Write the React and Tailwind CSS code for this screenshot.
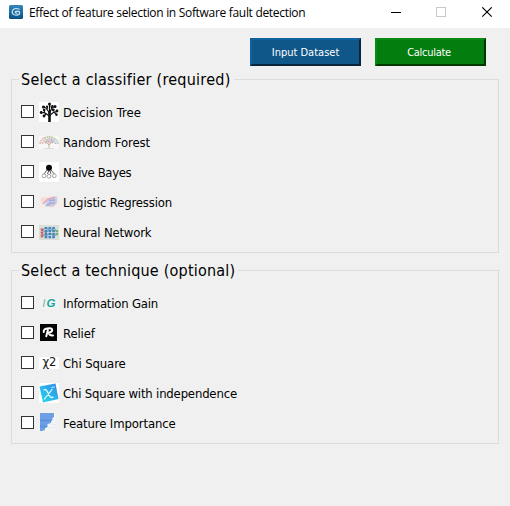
import React from "react";

const DecisionTree = () => (
  <svg width="20" height="20" viewBox="0 0 20 20">
    <rect width="20" height="20" fill="#fff" />
    <g stroke="#111" fill="none" strokeLinecap="round">
      <path d="M10.500 19.500V10" strokeWidth="2.600" />
      <path d="M10.500 14L5 10.500L2 11M10.500 13.500L15 10L18.500 9.500M10.500 11L7 6L4.500 5M10.500 11L13 6L16 4.500M10.500 10V2.500M5.500 10L5 7.500M15 10L17.500 12.500M7 12L5 14M8 7.500L8.500 4.500M13 7L12 4" strokeWidth="1.200" />
    </g>
    <g fill="#111">
      <circle cx="2.200" cy="10.500" r="1.400" /><circle cx="4.500" cy="5" r="1.600" />
      <circle cx="10.500" cy="2" r="1.500" /><circle cx="16" cy="4.500" r="1.500" />
      <circle cx="18" cy="9" r="1.400" /><circle cx="17.500" cy="12.800" r="1.200" />
      <circle cx="5" cy="14" r="1.400" /><circle cx="5.200" cy="8" r="1.300" />
      <circle cx="8" cy="4.500" r="1.100" /><circle cx="13.500" cy="4" r="1.100" /><circle cx="14.300" cy="8" r="1.400" />
    </g>
  </svg>
);

const RandomForest = () => (
  <svg width="20" height="20" viewBox="0 0 20 20">
    <rect y="4" width="20" height="13" fill="#f8f7f5" />
    <g fill="none" strokeWidth="2" strokeDasharray="2 .5">
      <path d="M1.200 12Q1.500 7 6 6" stroke="#e5c0cd" />
      <path d="M5 6.500Q10 3.500 15 6.500" stroke="#c6cba9" />
      <path d="M15 6.500Q18.800 8 18.800 12" stroke="#bddcbd" />
      <path d="M3.500 12Q4 9 7 8" stroke="#e3ceb2" />
      <path d="M7 8.500Q11 6 15 9" stroke="#bdb4d5" />
      <path d="M14 9Q16.500 9.500 16.500 12" stroke="#c8c3dc" />
      <path d="M6 11Q10 7.500 14 11" stroke="#d0b8bd" />
    </g>
    <path d="M10 16V9M10 13L6 9M10 13L14 9" fill="none" stroke="#b9aaa0" strokeWidth=".8" />
    <path d="M5 16.500H15" stroke="#dedfd1" />
  </svg>
);

const NaiveBayes = () => (
  <svg width="20" height="20" viewBox="0 0 20 20">
    <rect width="20" height="20" fill="#fff" />
    <g fill="none" stroke="#444" strokeWidth=".9">
      <path d="M9 7L5 12M10 8L8.500 12M10.500 8L12 12M11 7L15.500 12" />
      <g stroke="#999"><circle cx="5" cy="13.800" r="1.900" /><circle cx="10" cy="14.300" r="1.900" /><circle cx="15.300" cy="13.800" r="1.900" /></g>
    </g>
    <circle cx="10" cy="5.800" r="3" fill="#080808" />
  </svg>
);

const LogisticRegression = () => (
  <svg width="20" height="20" viewBox="0 0 20 20">
    <rect y="4" width="20" height="12" fill="#f6ede8" />
    <path d="M6 14L9 7L18 4.500V11L14 15Z" fill="#c5cee9" />
    <path d="M2 6L10 5L6 12L2 10Z" fill="#f1dcdc" />
    <path d="M4 12L9 7L16 5" stroke="#e3a3ae" strokeWidth="1.400" fill="none" />
    <path d="M7 14L11 11L16 11M10 8.500L16 8" stroke="#9dabde" strokeWidth="1.300" fill="none" />
    <path d="M9 14L16 9.500" stroke="#e2a8b4" strokeWidth="1" />
  </svg>
);

const NeuralNetwork = () => (
  <svg width="20" height="20" viewBox="0 0 20 20">
    <rect y="3" width="20" height="15" fill="#d9ded8" />
    <path d="M3 8L7 6L11 9L15 6L18 10M3 12L7 14L11 11L15 14L18 12M3 8L7 11L11 6L15 10" stroke="#738c9d" strokeWidth=".9" fill="none" />
    <g strokeWidth="2.600" strokeDasharray="2.300 .7" fill="none">
      <path d="M3 6.500V16" stroke="#c95c5c" />
      <path d="M7 5V16.500M10.800 5V16.500M14.500 5V16.500" stroke="#3984c7" />
      <path d="M17.800 8V14" stroke="#78b06d" />
    </g>
  </svg>
);

const InformationGain = () => (
  <svg width="20" height="20" viewBox="0 0 20 20">
    <rect x="1" y="5" width="18" height="11" fill="#f2f4f3" />
    <g fontFamily="Liberation Sans, sans-serif" fontSize="11.500" fontStyle="italic">
      <text x="3.200" y="14.300" fill="#5fc0bb">I</text>
      <text x="7.500" y="14.300" fontWeight="bold" fill="#20a59f">G</text>
    </g>
  </svg>
);

const Relief = () => (
  <svg width="20" height="20" viewBox="0 0 20 20">
    <rect x="1" y="1" width="17" height="17" fill="#050505" />
    <path d="M7.300 13.300L9 6.500M4.800 9Q4.300 6 8 5.500Q13.500 4.500 13.200 7.300Q12.800 9.400 9.500 9.700Q10.800 13 14 12.500" fill="none" stroke="#fff" strokeWidth="2" strokeLinecap="round" />
  </svg>
);

const ChiSquare = () => (
  <svg width="20" height="20" viewBox="0 0 20 20">
    <rect y="4" width="20" height="12" fill="#fff" />
    <g fontFamily="DejaVu Sans, sans-serif" fontStretch="normal" fill="#161616">
      <text x="3.600" y="12.800" fontSize="11.500">χ</text>
      <text x="10" y="13.300" fontSize="11.500">2</text>
    </g>
  </svg>
);

const ChiIndependence = () => (
  <svg width="20" height="20" viewBox="0 0 20 20">
    <defs>
      <linearGradient id="chi" x1="0" y1="1" x2="1" y2="0">
        <stop stopColor="#23dded" /><stop offset="1" stopColor="#3488e9" />
      </linearGradient>
    </defs>
    <rect width="20" height="20" fill="#fff" />
    <path d="M.5 3.500L16.500 .5L19.500 16L4 19.500Z" fill="url(#chi)" />
    <path d="M5 7Q7 5.500 8.500 9Q11.500 16.500 14 14M13 6.500L5.500 16" fill="none" stroke="#f3ffff" strokeWidth="1.200" strokeLinecap="round" />
    <path d="M12.500 4.500L15.500 4" stroke="#dcf7ff" />
  </svg>
);

const FeatureImportance = () => (
  <svg width="20" height="20" viewBox="0 0 20 20">
    <path d="M4 0H17V18H1Z" fill="#f3f4f6" />
    <path d="M0 0H15V4L13.500 5V7L12 8V10L8.500 11V14L6 15V17L3 18H1V0Z" fill="#6c9fe3" />
    <path d="M1 7.500H12.500M1 13.500H8" stroke="#568fdd" strokeWidth="1.500" />
    <path d="M11 11.500H17M8 14.500H17" stroke="#e5e7eb" strokeWidth=".8" />
  </svg>
);

const classifiers = [
  ["Decision Tree", DecisionTree, "tracking-[0.03px]"],
  ["Random Forest", RandomForest, "tracking-[-0.06px]"],
  ["Naive Bayes", NaiveBayes, "tracking-[-0.38px]"],
  ["Logistic Regression", LogisticRegression, "tracking-[-0.16px]"],
  ["Neural Network", NeuralNetwork, "tracking-[-0.2px]"],
];

const techniques = [
  ["Information Gain", InformationGain, "tracking-[-0.2px]"],
  ["Relief", Relief, "tracking-[-0.15px]"],
  ["Chi Square", ChiSquare, "tracking-[-0.1px]"],
  ["Chi Square with independence", ChiIndependence, "tracking-[-0.18px]"],
  ["Feature Importance", FeatureImportance, "tracking-[-0.12px]"],
];

function Group({ title, titleTracking, items, className }) {
  return (
    <fieldset className={`h-[174px] border border-[#dcdcdc] px-[9px] pb-[5px] ${className}`}>
      <legend className="-ml-[2px] flex h-px items-center whitespace-nowrap pl-[2px] pr-[3px] text-[16px]">
        <span className={`pt-px leading-5 ${titleTracking}`}>{title}</span>
      </legend>
      <div className="pt-[17px]">
        {items.map(([label, Icon, tracking]) => (
          <label key={label} className="flex h-[30px] items-start">
            <input type="checkbox" className="mt-2 size-[13px] shrink-0 appearance-none border border-[#333] bg-white" />
            <span className="ml-[5px] mt-[5px] size-5 shrink-0"><Icon /></span>
            <span className={`ml-1 whitespace-nowrap pt-px text-[13px] leading-[30px] ${tracking}`}>{label}</span>
          </label>
        ))}
      </div>
    </fieldset>
  );
}

export default function App() {
  return (
    <div className="h-[506px] w-[510px] overflow-hidden bg-[#f0f0f0] font-['DejaVu_Sans_Condensed','DejaVu_Sans',sans-serif] font-stretch-condensed text-black">
      <header className="flex h-7 items-start bg-white">
        <svg className="ml-[9px] mt-[5px] shrink-0" width="14" height="14" viewBox="0 0 14 14">
          <defs>
            <linearGradient id="app" x2="0" y2="1"><stop stopColor="#3488bc" /><stop offset="1" stopColor="#075084" /></linearGradient>
          </defs>
          <rect width="14" height="14" rx="1.500" fill="url(#app)" />
          <path d="M10.500 4.500Q7 2.500 4.300 4.500Q2 7.500 4.500 9.500Q8 11 10.500 9V6.800Q8 5.500 6.300 6.800Q6 8.500 8.500 8" fill="none" stroke="#c8e5f4" strokeWidth="1.200" />
        </svg>
        <h1 className="ml-[6px] w-[277px] whitespace-nowrap font-['Open_Sans','Noto_Sans',sans-serif] text-[12px] font-stretch-normal leading-[26px] tracking-[-0.31px]">
          Effect of feature selection in Software fault detection
        </h1>
        <svg className="ml-[85px] mt-[7px] shrink-0" width="102" height="11" viewBox="0 0 102 11">
          <path d="M0 5.500H10" stroke="#000" />
          <rect x="45.500" y=".5" width="9" height="9" fill="none" stroke="#c8c8c8" />
          <path d="M91.300 .3L100.700 9.700M100.700 .3L91.300 9.700" stroke="#000" strokeWidth="1.100" />
        </svg>
      </header>
      <main className="px-[11px] pt-[10px]">
        <div className="flex h-7 justify-end gap-[14px] pr-[13px] text-[11px] text-white">
          <button className="w-[111px] border-2 border-b-[#07263d] border-l-[#10629f] border-r-[#07263d] border-t-[#10629f] bg-[#0f5689] pt-[2px]">Input Dataset</button>
          <button className="w-[111px] border-2 border-b-[#003800] border-l-[#078b12] border-r-[#003800] border-t-[#078b12] bg-[#037d0d] pr-[3px] pt-[2px] tracking-[-0.3px]">Calculate</button>
        </div>
        <Group title="Select a classifier (required)" titleTracking="tracking-[0.25px]" items={classifiers} className="mt-[13px]" />
        <Group title="Select a technique (optional)" titleTracking="tracking-[0.21px]" items={techniques} className="mt-[17px]" />
      </main>
    </div>
  );
}
